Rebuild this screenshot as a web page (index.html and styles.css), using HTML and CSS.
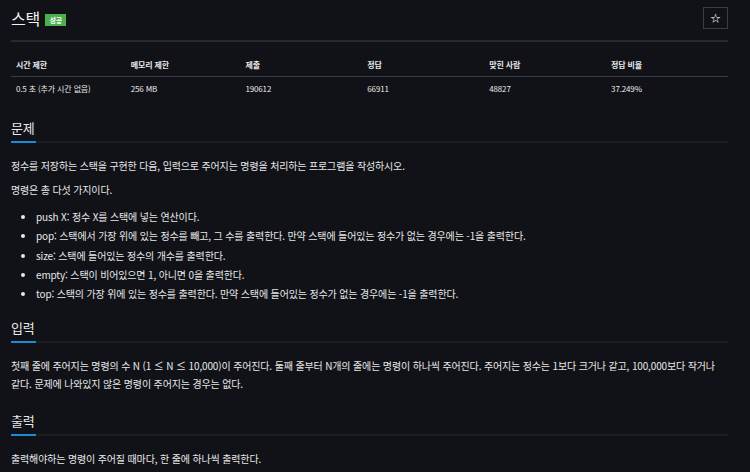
FILE: index.html
```html
<!DOCTYPE html>
<html lang="ko">
<head>
    <meta charset="UTF-8">
    <title>스택</title>
    <link rel="stylesheet" href="styles.css">
</head>
<body>

<div class="page">
    <div class="title-row">
        <h1>스택 <span class="badge">성공</span></h1>
        <button class="star-btn">☆</button>
    </div>

    <table class="info">
        <colgroup>
            <col class="col-sm">
            <col class="col-sm">
            <col>
            <col>
            <col>
            <col>
        </colgroup>
        <thead>
            <tr>
                <th>시간 제한</th>
                <th>메모리 제한</th>
                <th>제출</th>
                <th>정답</th>
                <th>맞힌 사람</th>
                <th>정답 비율</th>
            </tr>
        </thead>
        <tbody>
            <tr>
                <td>0.5 초 (추가 시간 없음)</td>
                <td>256 MB</td>
                <td>190612</td>
                <td>66911</td>
                <td>48827</td>
                <td>37.249%</td>
            </tr>
        </tbody>
    </table>

    <section class="block">
        <h2><span>문제</span></h2>
        <p>정수를 저장하는 스택을 구현한 다음, 입력으로 주어지는 명령을 처리하는 프로그램을 작성하시오.</p>
        <p>명령은 총 다섯 가지이다.</p>
        <ul>
            <li>push X: 정수 X를 스택에 넣는 연산이다.</li>
            <li>pop: 스택에서 가장 위에 있는 정수를 빼고, 그 수를 출력한다. 만약 스택에 들어있는 정수가 없는 경우에는 -1을 출력한다.</li>
            <li>size: 스택에 들어있는 정수의 개수를 출력한다.</li>
            <li>empty: 스택이 비어있으면 1, 아니면 0을 출력한다.</li>
            <li>top: 스택의 가장 위에 있는 정수를 출력한다. 만약 스택에 들어있는 정수가 없는 경우에는 -1을 출력한다.</li>
        </ul>
    </section>

    <section class="block">
        <h2><span>입력</span></h2>
        <p>첫째 줄에 주어지는 명령의 수 N (1 ≤ N ≤ 10,000)이 주어진다. 둘째 줄부터 N개의 줄에는 명령이 하나씩 주어진다. 주어지는 정수는 1보다 크거나 같고, 100,000보다 작거나 같다. 문제에 나와있지 않은 명령이 주어지는 경우는 없다.</p>
    </section>

    <section class="block">
        <h2><span>출력</span></h2>
        <p>출력해야하는 명령이 주어질 때마다, 한 줄에 하나씩 출력한다.</p>
    </section>
</div>

</body>
</html>
```

FILE: styles.css
```css
body {
    margin: 0;
    background: #101217;
    color: #e8e8e8;
    font-family: "Noto Sans CJK KR", "Noto Sans", sans-serif;
    font-size: 10px;
    letter-spacing: -0.15px;
    word-break: keep-all;
}

.page {
    padding: 0 22px 0 11px;
}

.title-row {
    display: flex;
    justify-content: space-between;
    align-items: flex-start;
    padding-top: 7px;
    padding-bottom: 11px;
    border-bottom: 2px solid #26292d;
}

h1 {
    margin: 0;
    font-size: 16px;
    font-weight: 400;
    line-height: 22px;
    color: #f2f2f2;
}

.badge {
    display: inline-block;
    vertical-align: 2px;
    background: #4cae4c;
    color: #fff;
    font-size: 7px;
    font-weight: 700;
    line-height: 12px;
    padding: 0 4px;
    margin-left: 1px;
}

.star-btn {
    width: 25px;
    height: 22px;
    background: none;
    border: 1px solid #3a3d42;
    color: #fff;
    font-size: 11px;
    padding: 0;
}

.info {
    width: 100%;
    table-layout: fixed;
    border-collapse: collapse;
    margin-top: 13px;
    font-size: 8px;
}

.info .col-sm {
    width: 16%;
}

.info th {
    text-align: left;
    font-weight: 700;
    padding: 4px 5px 6px;
    border-bottom: 1px solid #3a3d42;
}

.info td {
    padding: 6px 5px;
}

.block h2 {
    margin: 18px 0 0;
    font-size: 13px;
    font-weight: 400;
    border-bottom: 2px solid #1b1e22;
    line-height: 20px;
}

.block h2 span {
    display: inline-block;
    padding-bottom: 3px;
    border-bottom: 2px solid #1a8cd8;
    margin-bottom: -2px;
    width: 25px;
}

.block p {
    margin: 14px 0 0;
    line-height: 18px;
}

.block p + p {
    margin-top: 6px;
}

.block ul {
    margin: 8px 0 -3px;
    padding-left: 25px;
    line-height: 19.25px;
}
```
